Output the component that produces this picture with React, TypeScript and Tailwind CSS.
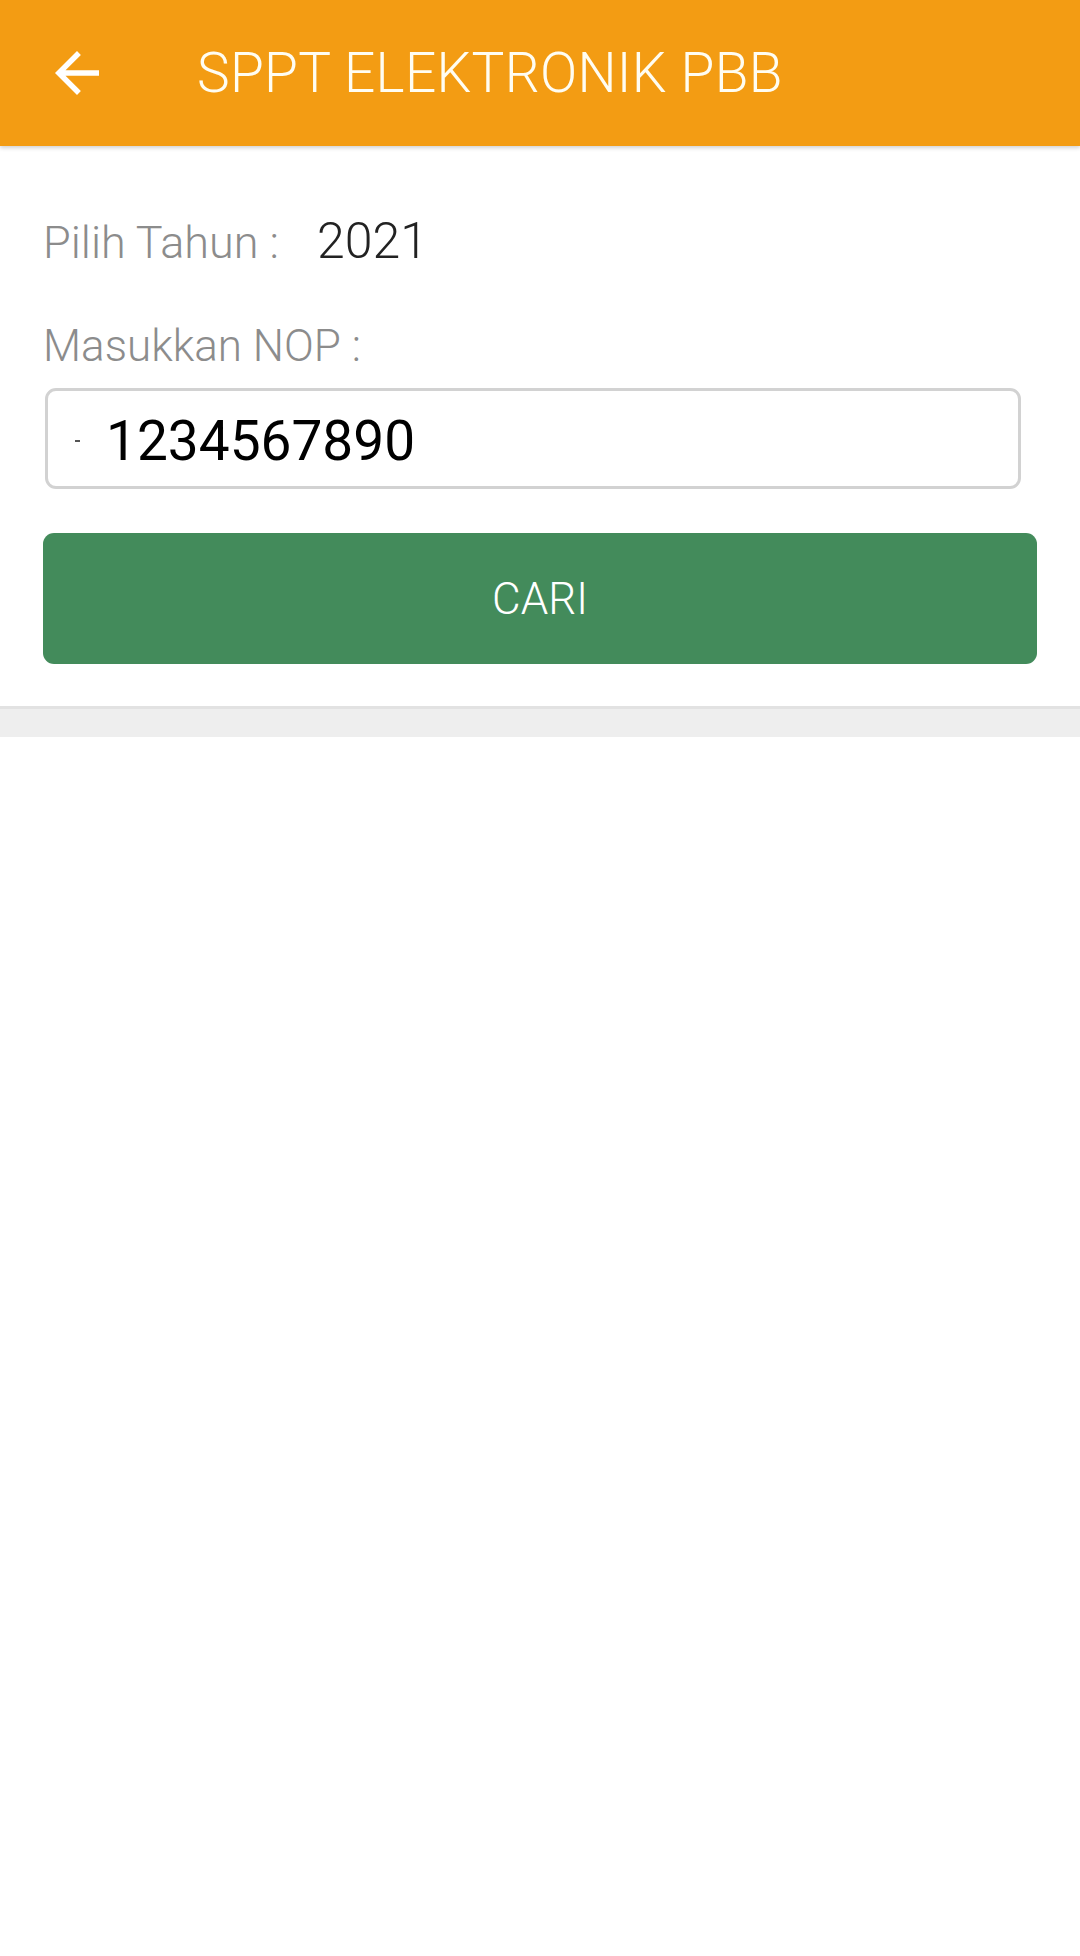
import React from "react";

const font = { fontFamily: "Roboto, 'Noto Sans', sans-serif" };

const App = () => {
  return (
    <div className="min-h-[1956px] w-[1080px] bg-white flex flex-col" style={font}>
      <div className="h-[146px] bg-[#f39c13] flex items-center shadow-[0_2px_4px_rgba(0,0,0,0.18)] relative z-10">
        <svg className="ml-[44px] w-[66px] h-[66px]" viewBox="0 0 24 24" fill="#ffffff">
          <path d="M20 11H7.83l5.59-5.59L12 4l-8 8 8 8 1.41-1.41L7.83 13H20v-2z" />
        </svg>
        <h1 className="ml-[87px] text-[55px] font-light text-[#fffdf2] leading-none tracking-[0.3px]">
          SPPT ELEKTRONIK PBB
        </h1>
      </div>

      <div className="px-[43px] pt-[65px] pb-[42px] bg-white">
        <div className="h-[60px] flex items-baseline">
          <span className="text-[45px] font-light leading-[60px] text-[#8c8c8c]">Pilih Tahun :</span>
          <span className="ml-[38px] text-[50px] font-light leading-[60px] text-[#222222]">2021</span>
        </div>

        <div className="mt-[49px] text-[44px] font-light leading-[52px] text-[#8c8c8c]">Masukkan NOP :</div>

        <div className="mt-[16px] ml-[2px] mr-[16px] h-[101px] border-[3px] border-[#d2d2d2] rounded-[11px] flex items-center pt-[5px]">
          <span className="ml-[27px] w-[5px] h-[2px] bg-[#555555]" />
          <span className="ml-[26px] text-[55px] leading-none text-black">1234567890</span>
        </div>

        <button
          type="button"
          className="mt-[44px] w-full h-[131px] bg-[#438b5b] rounded-[11px] flex items-center justify-center text-[44px] font-light text-white"
        >
          CARI
        </button>
      </div>

      <div className="h-[31px] bg-[#eeeeee] border-t-[3px] border-[#e2e2e2]" />
      <div className="flex-1 bg-white" />
    </div>
  );
};

export default App;
